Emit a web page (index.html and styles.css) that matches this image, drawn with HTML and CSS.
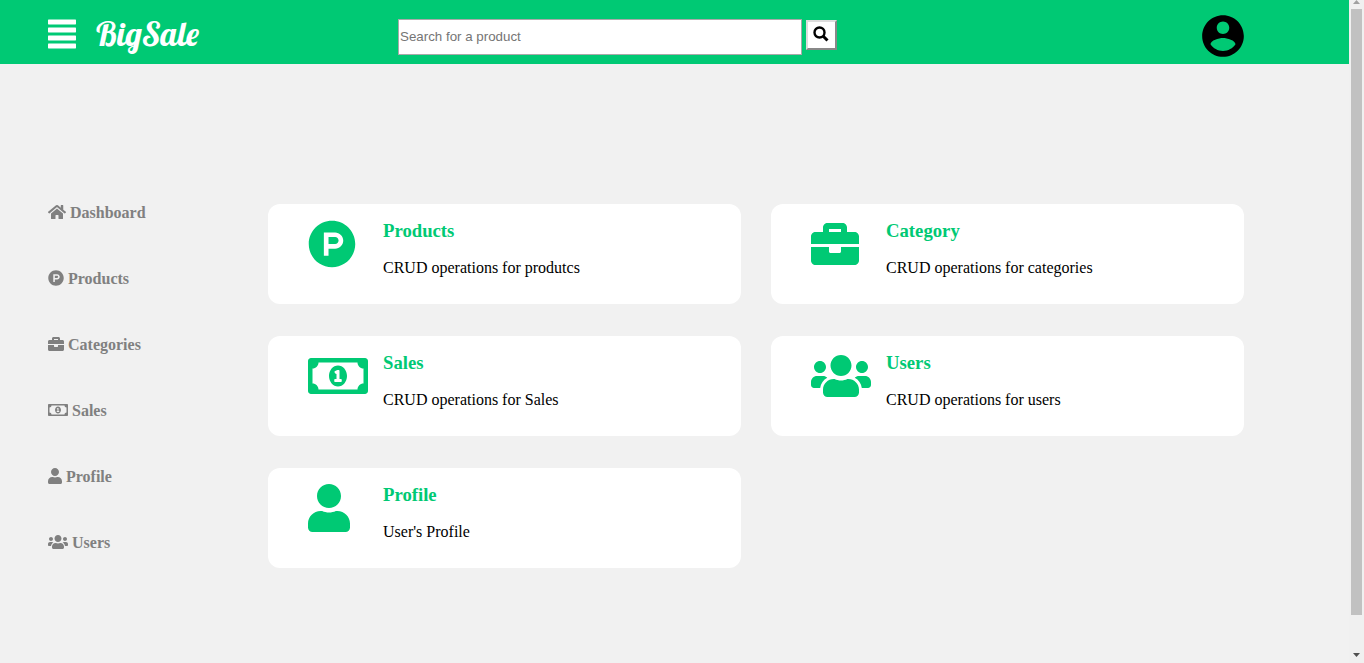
FILE: index.html
```html
<!DOCTYPE html>
<html lang="en">
<head>
<meta charset="utf-8">
<title>BigSale</title>
<link rel="stylesheet" href="styles.css">
</head>
<body>
<svg class="sprite" aria-hidden="true">
  <symbol id="home" viewBox="0 0 576 512"><path d="M280.37 148.26L96 300.11V464a16 16 0 0 0 16 16l112.06-.29a16 16 0 0 0 15.92-16V368a16 16 0 0 1 16-16h64a16 16 0 0 1 16 16v95.64a16 16 0 0 0 16 16.05L464 480a16 16 0 0 0 16-16V300L295.67 148.26a12.19 12.19 0 0 0-15.3 0zM571.6 251.47L488 182.56V44.05a12 12 0 0 0-12-12h-56a12 12 0 0 0-12 12v72.61L318.47 43a48 48 0 0 0-61 0L4.34 251.47a12 12 0 0 0-1.6 16.9l25.5 31A12 12 0 0 0 45.15 301l235.22-193.74a12.19 12.19 0 0 1 15.3 0L530.9 301a12 12 0 0 0 16.9-1.6l25.5-31a12 12 0 0 0-1.7-16.93z"/></symbol>
  <symbol id="product" viewBox="0 0 512 512"><path d="M326.3 218.8c0 20.5-16.7 37.2-37.2 37.2h-70.3v-74.4h70.3c20.5 0 37.2 16.7 37.2 37.2zM504 256c0 137-111 248-248 248S8 393 8 256 119 8 256 8s248 111 248 248zm-128.1-37.2c0-47.9-38.9-86.8-86.8-86.8H169.2v248h49.6v-74.4h70.3c47.9 0 86.8-38.9 86.8-86.8z"/></symbol>
  <symbol id="briefcase" viewBox="0 0 512 512"><path d="M320 336c0 8.84-7.16 16-16 16h-96c-8.84 0-16-7.16-16-16v-48H0v144c0 25.6 22.4 48 48 48h416c25.6 0 48-22.4 48-48V288H320v48zm144-208h-80V80c0-25.6-22.4-48-48-48H176c-25.6 0-48 22.4-48 48v48H48c-25.6 0-48 22.4-48 48v80h512v-80c0-25.6-22.4-48-48-48zm-144 0H192V96h128v32z"/></symbol>
  <symbol id="money" viewBox="0 0 640 512"><path d="M320 144c-53.02 0-96 50.14-96 112 0 61.85 42.98 112 96 112 53 0 96-50.13 96-112 0-61.86-42.98-112-96-112zm40 168c0 4.42-3.58 8-8 8h-64c-4.42 0-8-3.58-8-8v-16c0-4.42 3.58-8 8-8h16v-55.44l-.47.31a7.992 7.992 0 0 1-11.09-2.22l-8.88-13.31a7.992 7.992 0 0 1 2.22-11.09l15.33-10.22a23.99 23.99 0 0 1 13.31-4.03H328c4.42 0 8 3.58 8 8v88h16c4.42 0 8 3.58 8 8v16zM608 64H32C14.33 64 0 78.33 0 96v320c0 17.67 14.33 32 32 32h576c17.67 0 32-14.33 32-32V96c0-17.67-14.33-32-32-32zm-16 272c-35.35 0-64 28.65-64 64H112c0-35.35-28.65-64-64-64V176c35.35 0 64-28.65 64-64h416c0 35.35 28.65 64 64 64v160z"/></symbol>
  <symbol id="user" viewBox="0 0 448 512"><path d="M224 256c70.7 0 128-57.3 128-128S294.7 0 224 0 96 57.3 96 128s57.3 128 128 128zm89.6 32h-16.7c-22.2 10.2-46.9 16-72.9 16s-50.6-5.8-72.9-16h-16.7C60.2 288 0 348.2 0 422.4V464c0 26.5 21.5 48 48 48h352c26.5 0 48-21.5 48-48v-41.6c0-74.2-60.2-134.4-134.4-134.4z"/></symbol>
  <symbol id="users" viewBox="0 0 640 512"><path d="M96 224c35.3 0 64-28.7 64-64s-28.7-64-64-64-64 28.7-64 64 28.7 64 64 64zm448 0c35.3 0 64-28.7 64-64s-28.7-64-64-64-64 28.7-64 64 28.7 64 64 64zm32 32h-64c-17.6 0-33.5 7.1-45.1 18.6 40.3 22.1 68.9 62 75.1 109.4h66c17.7 0 32-14.3 32-32v-32c0-35.3-28.7-64-64-64zm-256 0c61.9 0 112-50.1 112-112S381.9 32 320 32 208 82.1 208 144s50.1 112 112 112zm76.8 32h-8.3c-20.8 10-43.9 16-68.5 16s-47.6-6-68.5-16h-8.3C179.6 288 128 339.6 128 403.2V432c0 26.5 21.5 48 48 48h288c26.5 0 48-21.5 48-48v-28.8c0-63.6-51.6-115.2-115.2-115.2zm-223.7-13.4C161.5 263.1 145.6 256 128 256H64c-35.3 0-64 28.7-64 64v32c0 17.7 14.3 32 32 32h65.9c6.3-47.4 34.9-87.3 75.2-109.4z"/></symbol>
</svg>
<div class="window">
  <div class="page">
    <header class="header">
      <div class="brand">
        <button class="menu" type="button" aria-label="Menu">
          <svg width="28" height="30" viewBox="0 0 28 30"><rect y=".6" width="28" height="4.8" rx=".6"/><rect y="8.6" width="28" height="4.8" rx=".6"/><rect y="16.6" width="28" height="4.8" rx=".6"/><rect y="24.6" width="28" height="4.8" rx=".6"/></svg>
        </button>
        <a class="logo" href="#">BigSale</a>
      </div>
      <form class="search">
        <input class="search-input" type="text" placeholder="Search for a product" aria-label="Search for a product">
        <button class="search-button" type="button" aria-label="Search">
          <svg width="16" height="16" viewBox="0 0 16 16"><circle cx="6.5" cy="6.5" r="5" fill="none" stroke="#000" stroke-width="2.4"/><path d="M10 10l4.5 4.5" stroke="#000" stroke-width="3"/></svg>
        </button>
      </form>
      <a class="account" href="#" aria-label="Account">
        <svg width="50" height="50" viewBox="0 0 24 24"><path d="M12 2C6.48 2 2 6.48 2 12s4.48 10 10 10 10-4.48 10-10S17.52 2 12 2zm0 3c1.66 0 3 1.34 3 3s-1.34 3-3 3-3-1.34-3-3 1.34-3 3-3zm0 14.2c-2.5 0-4.71-1.28-6-3.22.03-1.99 4-3.08 6-3.08 1.99 0 5.97 1.09 6 3.08-1.29 1.94-3.5 3.22-6 3.22z"/></svg>
      </a>
    </header>
    <div class="content">
      <nav class="nav">
        <a href="#"><svg width="18" height="16"><use href="#home"/></svg>Dashboard</a>
        <a href="#"><svg width="16" height="16"><use href="#product"/></svg>Products</a>
        <a href="#"><svg width="16" height="16"><use href="#briefcase"/></svg>Categories</a>
        <a href="#"><svg width="20" height="16"><use href="#money"/></svg>Sales</a>
        <a href="#"><svg width="14" height="16"><use href="#user"/></svg>Profile</a>
        <a href="#"><svg width="20" height="16"><use href="#users"/></svg>Users</a>
      </nav>
      <main class="cards">
        <article class="card"><svg class="card-icon" width="48" height="48"><use href="#product"/></svg><div><h3>Products</h3><p>CRUD operations for produtcs</p></div></article>
        <article class="card"><svg class="card-icon" width="48" height="48"><use href="#briefcase"/></svg><div><h3>Category</h3><p>CRUD operations for categories</p></div></article>
        <article class="card"><svg class="card-icon" width="60" height="48"><use href="#money"/></svg><div><h3>Sales</h3><p>CRUD operations for Sales</p></div></article>
        <article class="card"><svg class="card-icon" width="60" height="48"><use href="#users"/></svg><div><h3>Users</h3><p>CRUD operations for users</p></div></article>
        <article class="card"><svg class="card-icon" width="42" height="48"><use href="#user"/></svg><div><h3>Profile</h3><p>User's Profile</p></div></article>
      </main>
    </div>
  </div>
  <div class="scrollbar" aria-hidden="true">
    <svg width="7" height="4" viewBox="0 0 7 4"><path d="M0 4L3.5 0 7 4z" fill="#a0a0a0"/></svg>
    <div class="track"><div class="thumb"></div></div>
    <svg width="7" height="4" viewBox="0 0 7 4"><path d="M0 0h7L3.5 4z" fill="#505050"/></svg>
  </div>
</div>
</body>
</html>
```
FILE: styles.css
```css
* {
  box-sizing: border-box;
}

body {
  margin: 0;
  background: #f1f1f1;
  color: #000;
  font: 16px/18px "Liberation Serif", "Times New Roman", serif;
}

a {
  color: inherit;
  text-decoration: none;
}

svg {
  display: block;
  fill: currentColor;
}

.sprite {
  display: none;
}

.window {
  display: flex;
  min-height: 100vh;
}

.page {
  flex: 1;
  min-width: 0;
}

.header {
  display: flex;
  align-items: center;
  height: 64px;
  padding: 0 101px 0 48px;
  background: #00c974;
}

.brand {
  display: flex;
  align-items: center;
  gap: 20px;
  width: 350px;
  padding-top: 4px;
  color: #fff;
}

.menu {
  padding: 0;
  border: 0;
  background: none;
  color: inherit;
}

.logo {
  font: 33px/40px "Lobster", "Liberation Serif", serif;
}

.search {
  display: flex;
  align-items: flex-start;
  gap: 4px;
  padding-top: 10px;
}

.search-input {
  width: 404px;
  height: 36px;
  padding: 0 1px 1px;
  border: 1px solid #a9a9a9;
  background: #fff;
  font-family: "Liberation Sans", Arial, sans-serif;
}

.search-input::placeholder {
  color: #757575;
}

.search-button {
  display: flex;
  justify-content: center;
  width: 31px;
  height: 30px;
  margin-top: 1px;
  padding: 4px 1px 0 0;
  border: 2px solid;
  border-color: #ddd #888 #888 #ddd;
  background: #fff;
}

.account {
  margin-left: auto;
  padding-top: 8px;
}

.content {
  display: flex;
  padding: 140px 105px 95px 48px;
}

.nav {
  display: flex;
  flex-direction: column;
  gap: 48px;
  width: 220px;
  color: #808080;
  font-weight: bold;
}

.nav a {
  display: flex;
  align-items: flex-start;
  gap: 4px;
}

.cards {
  display: grid;
  flex: 1;
  grid-template-columns: 1fr 1fr;
  align-content: start;
  gap: 32px 30px;
}

.card {
  display: grid;
  grid-template-columns: 75px 1fr;
  align-items: start;
  min-height: 100px;
  padding: 16px 40px;
  border-radius: 12px;
  background: #fff;
}

.card-icon,
.card h3 {
  color: #00c974;
}

.card h3 {
  margin: 0 0 17px;
  line-height: 22px;
}

.card p {
  margin: 0;
}

.scrollbar {
  display: flex;
  flex-direction: column;
  align-items: center;
  width: 15px;
  padding: 0 0 6px;
  background: #f0f0f0;
}

.track {
  flex: 1;
  width: 11px;
  padding: 5px 0 38px;
}

.thumb {
  height: 100%;
  background: #c1c1c1;
}
```
